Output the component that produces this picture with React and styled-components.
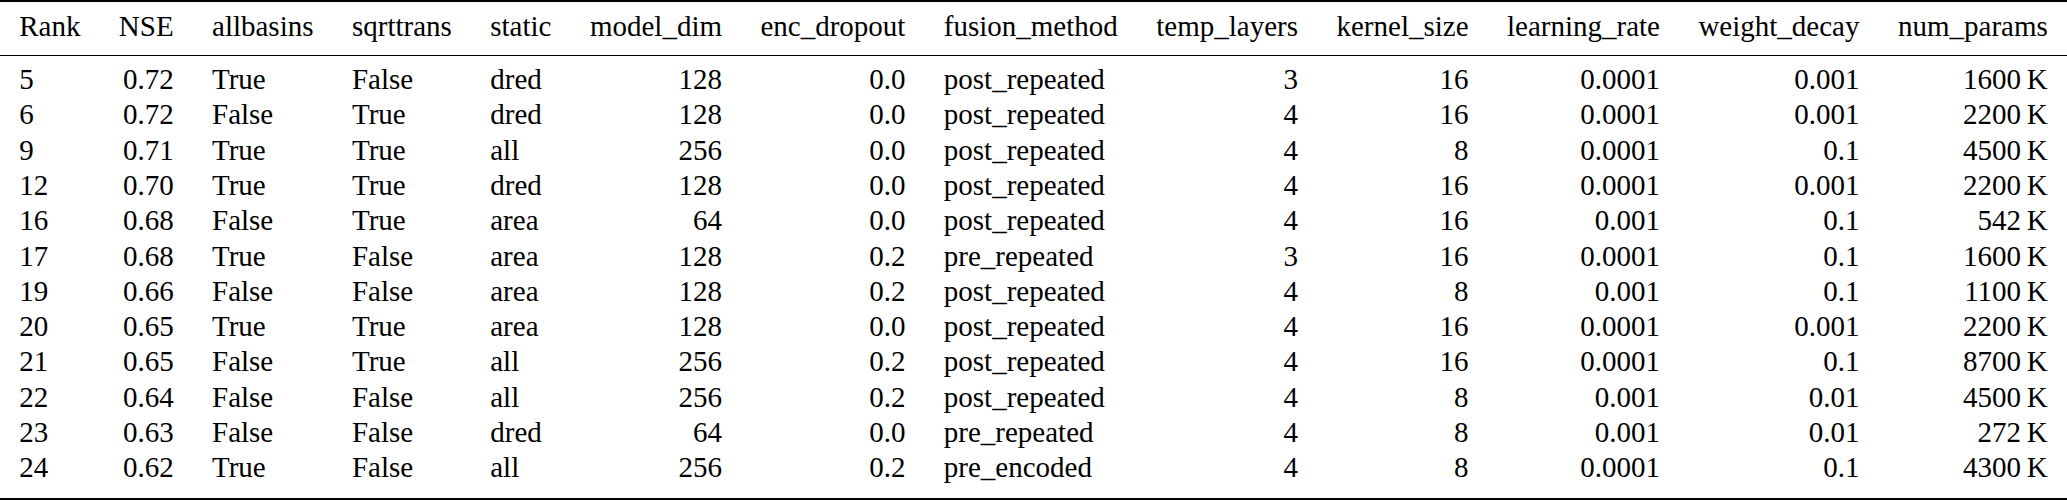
import styled, { createGlobalStyle } from 'styled-components';

const GlobalStyle = createGlobalStyle`
  body {
    margin: 0;
    background: #fff;
  }
`;

const Table = styled.table`
  width: 100%;
  border-collapse: separate;
  border-spacing: 0;
  font-family: "Liberation Serif", "Times New Roman", serif;
  font-size: 29px;
  color: #000;
  white-space: nowrap;
  border-top: 2px solid #000;
  border-bottom: 2.5px solid #000;
`;

const HeaderCell = styled.th`
  font-weight: normal;
  text-align: ${p => p.$align};
  line-height: 35.3px;
  padding: 6.5px 19.2px 11px;
  border-bottom: 1.5px solid #000;
`;

const Row = styled.tr`
  &:first-child td {
    padding-top: 6.3px;
  }
  &:last-child td {
    padding-bottom: 12.3px;
  }
`;

const Cell = styled.td`
  text-align: ${p => p.$align};
  line-height: 35.3px;
  padding: 0 19.2px;
`;

// колонки: заголовок и выравнивание
const columns = [
  ['Rank', 'left'],
  ['NSE', 'right'],
  ['allbasins', 'left'],
  ['sqrttrans', 'left'],
  ['static', 'left'],
  ['model_dim', 'right'],
  ['enc_dropout', 'right'],
  ['fusion_method', 'left'],
  ['temp_layers', 'right'],
  ['kernel_size', 'right'],
  ['learning_rate', 'right'],
  ['weight_decay', 'right'],
  ['num_params', 'right'],
];

const rows = [
  ['5', '0.72', 'True', 'False', 'dred', '128', '0.0', 'post_repeated', '3', '16', '0.0001', '0.001', '1600'],
  ['6', '0.72', 'False', 'True', 'dred', '128', '0.0', 'post_repeated', '4', '16', '0.0001', '0.001', '2200'],
  ['9', '0.71', 'True', 'True', 'all', '256', '0.0', 'post_repeated', '4', '8', '0.0001', '0.1', '4500'],
  ['12', '0.70', 'True', 'True', 'dred', '128', '0.0', 'post_repeated', '4', '16', '0.0001', '0.001', '2200'],
  ['16', '0.68', 'False', 'True', 'area', '64', '0.0', 'post_repeated', '4', '16', '0.001', '0.1', '542'],
  ['17', '0.68', 'True', 'False', 'area', '128', '0.2', 'pre_repeated', '3', '16', '0.0001', '0.1', '1600'],
  ['19', '0.66', 'False', 'False', 'area', '128', '0.2', 'post_repeated', '4', '8', '0.001', '0.1', '1100'],
  ['20', '0.65', 'True', 'True', 'area', '128', '0.0', 'post_repeated', '4', '16', '0.0001', '0.001', '2200'],
  ['21', '0.65', 'False', 'True', 'all', '256', '0.2', 'post_repeated', '4', '16', '0.0001', '0.1', '8700'],
  ['22', '0.64', 'False', 'False', 'all', '256', '0.2', 'post_repeated', '4', '8', '0.001', '0.01', '4500'],
  ['23', '0.63', 'False', 'False', 'dred', '64', '0.0', 'pre_repeated', '4', '8', '0.001', '0.01', '272'],
  ['24', '0.62', 'True', 'False', 'all', '256', '0.2', 'pre_encoded', '4', '8', '0.0001', '0.1', '4300'],
];

function App() {
  return (
    <>
      <GlobalStyle />
      <Table>
        <thead>
          <tr>
            {columns.map(([name, align]) => (
              <HeaderCell key={name} $align={align}>{name}</HeaderCell>
            ))}
          </tr>
        </thead>
        <tbody>
          {rows.map((row, index) => (
            <Row key={index}>
              {row.map((value, i) => (
                <Cell key={i} $align={columns[i][1]}>
                  {i === row.length - 1 ? `${value}\u2009K` : value}
                </Cell>
              ))}
            </Row>
          ))}
        </tbody>
      </Table>
    </>
  );
}

export default App;
